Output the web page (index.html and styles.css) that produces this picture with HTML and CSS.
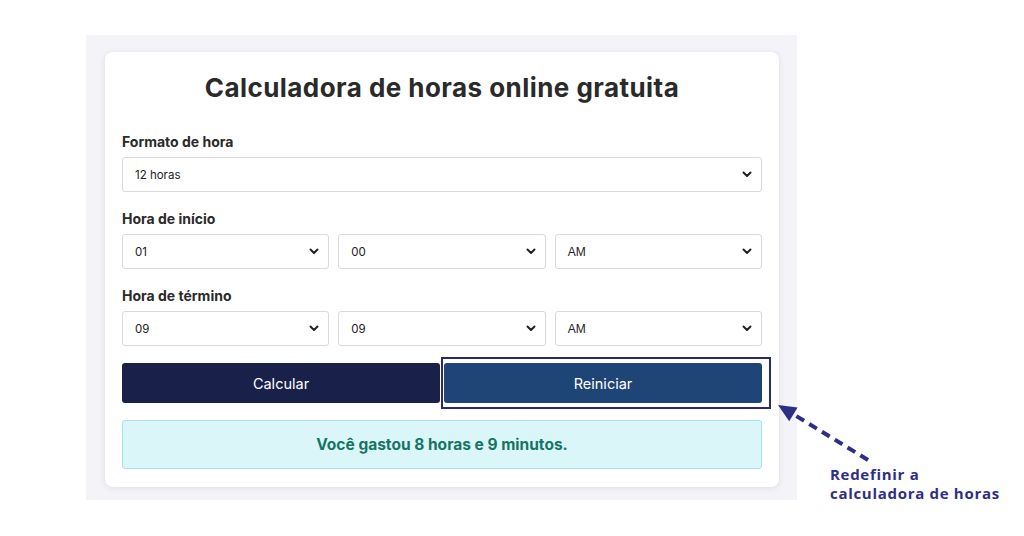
FILE: index.html
```html
<!DOCTYPE html>
<html lang="pt">
<head>
<meta charset="utf-8">
<title>Calculadora de horas</title>
<link rel="stylesheet" href="styles.css">
</head>
<body>
<div class="page">
  <div class="panel">
    <div class="card">
      <h1 class="title">Calculadora de horas online gratuita</h1>
      <div class="field">
        <div class="label">Formato de hora</div>
        <div class="select">
          <span>12 horas</span>
          <svg class="chev" width="10" height="7" viewBox="0 0 10 7"><path d="M1.5 1.5 L5 5 L8.5 1.5" fill="none" stroke="#222" stroke-width="2" stroke-linecap="round" stroke-linejoin="round"/></svg>
        </div>
      </div>
      <div class="field">
        <div class="label">Hora de início</div>
        <div class="row3">
          <div class="select"><span>01</span><svg class="chev" width="10" height="7" viewBox="0 0 10 7"><path d="M1.5 1.5 L5 5 L8.5 1.5" fill="none" stroke="#222" stroke-width="2" stroke-linecap="round" stroke-linejoin="round"/></svg></div>
          <div class="select"><span>00</span><svg class="chev" width="10" height="7" viewBox="0 0 10 7"><path d="M1.5 1.5 L5 5 L8.5 1.5" fill="none" stroke="#222" stroke-width="2" stroke-linecap="round" stroke-linejoin="round"/></svg></div>
          <div class="select"><span class="ampm">AM</span><svg class="chev" width="10" height="7" viewBox="0 0 10 7"><path d="M1.5 1.5 L5 5 L8.5 1.5" fill="none" stroke="#222" stroke-width="2" stroke-linecap="round" stroke-linejoin="round"/></svg></div>
        </div>
      </div>
      <div class="field">
        <div class="label">Hora de término</div>
        <div class="row3">
          <div class="select"><span>09</span><svg class="chev" width="10" height="7" viewBox="0 0 10 7"><path d="M1.5 1.5 L5 5 L8.5 1.5" fill="none" stroke="#222" stroke-width="2" stroke-linecap="round" stroke-linejoin="round"/></svg></div>
          <div class="select"><span>09</span><svg class="chev" width="10" height="7" viewBox="0 0 10 7"><path d="M1.5 1.5 L5 5 L8.5 1.5" fill="none" stroke="#222" stroke-width="2" stroke-linecap="round" stroke-linejoin="round"/></svg></div>
          <div class="select"><span class="ampm">AM</span><svg class="chev" width="10" height="7" viewBox="0 0 10 7"><path d="M1.5 1.5 L5 5 L8.5 1.5" fill="none" stroke="#222" stroke-width="2" stroke-linecap="round" stroke-linejoin="round"/></svg></div>
        </div>
      </div>
      <div class="buttons">
        <button class="btn btn-calc">Calcular</button>
        <div class="reset-wrap">
          <button class="btn btn-reset">Reiniciar</button>
          <div class="highlight"></div>
        </div>
      </div>
      <div class="result">Você gastou 8 horas e 9 minutos.</div>
    </div>
  </div>
  <svg class="arrow" width="110" height="70" viewBox="0 0 110 70">
    <line x1="92" y1="58" x2="17" y2="12" stroke="#2f2e86" stroke-width="4" stroke-dasharray="9 6"/>
    <polygon points="2,3 13.2,19.2 21.6,5.6" fill="#2f2e86"/>
  </svg>
  <div class="note">Redefinir a<br>calculadora de horas</div>
</div>
</body>
</html>
```
FILE: styles.css
```css
* { box-sizing: border-box; }
html, body { margin: 0; padding: 0; background: #fff; }
body { width: 1024px; height: 536px; overflow: hidden; font-family: "Inter", "Noto Sans", sans-serif; }

.page { position: relative; padding: 35px 0 0 86px; }

.panel {
  width: 711px;
  height: 465px;
  background: #f3f3f8;
  padding: 17px 18px 13px 19px;
}

.card {
  background: #fff;
  border-radius: 8px;
  box-shadow: 0 1px 6px rgba(40, 40, 80, 0.10);
  padding: 18px 17px 17px 17px;
  height: 435px;
}

.title {
  margin: 0 0 27px 0;
  text-align: center;
  font-size: 26px;
  line-height: 36px;
  font-weight: 700;
  color: #2a2a2a;
  letter-spacing: 0.45px;
}

.field { margin-bottom: 18px; }

.label {
  font-size: 14px;
  line-height: 18px;
  font-weight: 700;
  color: #2a2a2a;
  margin-bottom: 6px;
}

.select {
  height: 35px;
  border: 1px solid #d9d9de;
  border-radius: 3px;
  background: #fff;
  display: flex;
  align-items: center;
  justify-content: space-between;
  padding: 0 9px 0 12px;
  font-size: 11.5px;
  color: #222;
}
.ampm { font-family: "Liberation Sans", Arial, sans-serif; font-size: 12px; }
.chev { display: block; }

.row3 {
  display: grid;
  grid-template-columns: 1fr 1fr 1fr;
  gap: 9px;
}

.buttons {
  display: grid;
  grid-template-columns: 318px 318px;
  gap: 4px;
  margin-top: -1px;
  margin-bottom: 17px;
}

.btn {
  height: 40px;
  border: none;
  border-radius: 3px;
  color: #fff;
  font-family: "Inter", "Noto Sans", sans-serif;
  font-size: 14.5px;
  font-weight: 400;
  width: 100%;
}
.btn-calc { background: #19204a; }
.btn-reset { background: #1f4476; display: block; }

.reset-wrap { position: relative; }
.highlight {
  position: absolute;
  left: -3px;
  top: -6px;
  width: 330px;
  height: 52px;
  border: 2px solid #2b2a6b;
}

.result {
  height: 49px;
  background: #dbf6f8;
  border: 1px solid #a9e3e8;
  border-radius: 3px;
  display: flex;
  align-items: center;
  justify-content: center;
  font-size: 15.5px;
  font-weight: 700;
  color: #157565;
}

.arrow { position: absolute; left: 776px; top: 402px; }

.note {
  position: absolute;
  left: 830px;
  top: 465px;
  font-family: "Open Sans", "Noto Sans", sans-serif;
  font-weight: 700;
  font-size: 15px;
  line-height: 19px;
  color: #2f2e86;
  letter-spacing: 0.7px;
}
```
